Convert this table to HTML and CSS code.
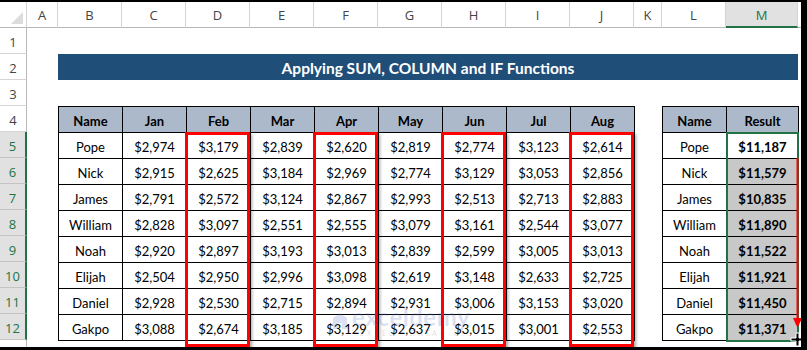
FILE: index.html
```html
<!DOCTYPE html>
<html lang="en">
<head>
  <meta charset="UTF-8">
  <title>Applying SUM, COLUMN and IF Functions</title>
  <link rel="stylesheet" href="styles.css">
</head>
<body>
  <div class="frame">
    <!-- column letters -->
    <div class="colheads">
      <div class="ch corner"><span class="tri"></span></div>
      <div class="ch col-a">A</div>
      <div class="ch">B</div>
      <div class="ch">C</div>
      <div class="ch">D</div>
      <div class="ch">E</div>
      <div class="ch">F</div>
      <div class="ch">G</div>
      <div class="ch">H</div>
      <div class="ch">I</div>
      <div class="ch">J</div>
      <div class="ch col-k">K</div>
      <div class="ch">L</div>
      <div class="ch col-m sel">M</div>
      <div class="ch col-rest"></div>
    </div>

    <div class="sheet">
      <!-- row numbers -->
      <div class="rowheads">
        <div class="rh">1</div>
        <div class="rh">2</div>
        <div class="rh">3</div>
        <div class="rh">4</div>
        <div class="rh sel">5</div>
        <div class="rh sel">6</div>
        <div class="rh sel">7</div>
        <div class="rh sel">8</div>
        <div class="rh sel">9</div>
        <div class="rh sel">10</div>
        <div class="rh sel">11</div>
        <div class="rh sel">12</div>
        <div class="rh"></div>
      </div>

      <div class="canvas">
        <div class="blank-row"></div>
        <div class="title">Applying SUM, COLUMN and IF Functions</div>
        <div class="blank-row"></div>

        <div class="tables">
          <div class="tbl-wrap">
            <table class="data sales">
              <tr class="head">
                <td>Name</td><td>Jan</td><td>Feb</td><td>Mar</td><td>Apr</td><td>May</td><td>Jun</td><td>Jul</td><td>Aug</td>
              </tr>
              <tr><td>Pope</td><td>$2,974</td><td>$3,179</td><td>$2,839</td><td>$2,620</td><td>$2,819</td><td>$2,774</td><td>$3,123</td><td>$2,614</td></tr>
              <tr><td>Nick</td><td>$2,915</td><td>$2,625</td><td>$3,184</td><td>$2,969</td><td>$2,774</td><td>$3,129</td><td>$3,053</td><td>$2,856</td></tr>
              <tr><td>James</td><td>$2,791</td><td>$2,572</td><td>$3,124</td><td>$2,867</td><td>$2,993</td><td>$2,513</td><td>$2,713</td><td>$2,883</td></tr>
              <tr><td>William</td><td>$2,828</td><td>$3,097</td><td>$2,551</td><td>$2,555</td><td>$3,079</td><td>$3,161</td><td>$2,544</td><td>$3,077</td></tr>
              <tr><td>Noah</td><td>$2,920</td><td>$2,897</td><td>$3,193</td><td>$3,013</td><td>$2,839</td><td>$2,599</td><td>$3,005</td><td>$3,013</td></tr>
              <tr><td>Elijah</td><td>$2,504</td><td>$2,950</td><td>$2,996</td><td>$3,098</td><td>$2,619</td><td>$3,148</td><td>$2,633</td><td>$2,725</td></tr>
              <tr><td>Daniel</td><td>$2,928</td><td>$2,530</td><td>$2,715</td><td>$2,894</td><td>$2,931</td><td>$3,006</td><td>$3,153</td><td>$3,020</td></tr>
              <tr><td>Gakpo</td><td>$3,088</td><td>$2,674</td><td>$3,185</td><td>$3,129</td><td>$2,637</td><td>$3,015</td><td>$3,001</td><td>$2,553</td></tr>
            </table>

            <!-- red boxes around every other month -->
            <div class="hl hl-d"></div>
            <div class="hl hl-f"></div>
            <div class="hl hl-h"></div>
            <div class="hl hl-j"></div>

            <div class="watermark">
              <svg class="wm-icon" width="16" height="18" viewBox="0 0 16 18">
                <path d="M8 1 L15 6 L15 17 L10 17 L10 11 L6 11 L6 17 L1 17 L1 6 Z" fill="currentColor"/>
              </svg>
              <div class="wm-text">
                <span class="wm-name">exceldemy</span>
                <span class="wm-sub">EXCEL · DATA · BI</span>
              </div>
            </div>
          </div>

          <div class="tbl-wrap">
            <table class="data result">
              <tr class="head"><td>Name</td><td>Result</td></tr>
              <tr><td>Pope</td><td class="val active">$11,187</td></tr>
              <tr><td>Nick</td><td class="val">$11,579</td></tr>
              <tr><td>James</td><td class="val">$10,835</td></tr>
              <tr><td>William</td><td class="val">$11,890</td></tr>
              <tr><td>Noah</td><td class="val">$11,522</td></tr>
              <tr><td>Elijah</td><td class="val">$11,921</td></tr>
              <tr><td>Daniel</td><td class="val">$11,450</td></tr>
              <tr><td>Gakpo</td><td class="val">$11,371</td></tr>
            </table>

            <div class="selection"></div>

            <svg class="fill-arrow" width="12" height="175" viewBox="0 0 12 175">
              <line x1="6.5" y1="0" x2="6.5" y2="162" stroke="#ff0000" stroke-width="2"/>
              <polygon points="2,160 11,160 6.5,170" fill="#ff0000"/>
            </svg>

            <svg class="fill-cursor" width="16" height="16" viewBox="0 0 16 16">
              <path d="M6 1 H9 V6 H14 V9 H9 V14 H6 V9 H1 V6 H6 Z" fill="#000" stroke="#fff" stroke-width="1"/>
            </svg>
          </div>
        </div>
      </div>
    </div>
  </div>
</body>
</html>
```

FILE: styles.css
```css
:root {
  --title-color: #1f4e78;
  --head-color: #acb9ca;
  --excel-green: #217346;
  --hdr-line: #d4d4d4;
}
* { margin: 0; padding: 0; box-sizing: border-box; }
body {
  font-family: Lato, 'Liberation Sans', sans-serif;
  background: #fff;
}
.frame {
  width: 807px;
  height: 350px;
  border-top: 2px solid #000;
  border-right: 6px solid #000;
  border-bottom: 3px solid #000;
  overflow: hidden;
  background: #fff;
}

/* column letters */
.colheads {
  display: flex;
  height: 26px;
}
.ch {
  flex: none;
  width: 64px;
  height: 26px;
  border-right: 1px solid var(--hdr-line);
  border-bottom: 1px solid #b8b8b8;
  display: flex;
  align-items: center;
  justify-content: center;
  font-family: 'Open Sans', 'Liberation Sans', sans-serif;
  font-size: 13px;
  color: #444;
  padding-top: 1px;
}
.ch.corner { width: 27px; position: relative; }
.ch.col-a { width: 31px; }
.ch.col-k { width: 28px; }
.ch.col-m { width: 72px; }
.ch.col-rest { flex: 1; border-right: none; }
.ch.sel {
  background: #e1e1e1;
  color: var(--excel-green);
  border-bottom: 2px solid var(--excel-green);
}
.tri {
  position: absolute;
  right: 3px;
  bottom: 3px;
  width: 0;
  height: 0;
  border-left: 12px solid transparent;
  border-bottom: 12px solid #dcdcdc;
}

/* rows */
.sheet {
  display: flex;
}
.rowheads {
  flex: none;
  width: 27px;
}
.rh {
  height: 26px;
  border-right: 1px solid #b8b8b8;
  border-bottom: 1px solid var(--hdr-line);
  display: flex;
  align-items: flex-end;
  justify-content: center;
  padding-bottom: 3px;
  font-family: 'Open Sans', 'Liberation Sans', sans-serif;
  font-size: 13px;
  line-height: 16px;
  color: #444;
}
.rh.sel {
  background: #e1e1e1;
  color: var(--excel-green);
  border-right: 2px solid var(--excel-green);
  border-bottom-color: #c4c4c4;
}

.canvas {
  flex: 1;
}
.blank-row { height: 26px; }
.title {
  margin-left: 31px;
  width: 740px;
  height: 26px;
  background: var(--title-color);
  color: #fff;
  font-weight: 700;
  font-size: 15.5px;
  display: flex;
  align-items: center;
  justify-content: center;
  padding-top: 1px;
}

.tables {
  display: flex;
  gap: 27px;
  margin-left: 31px;
}
.tbl-wrap {
  position: relative;
}
.data {
  border-collapse: separate;
  border-spacing: 0;
  table-layout: fixed;
  border-left: 1px solid #000;
  border-top: 1px solid #000;
}
.data td {
  width: 64px;
  height: 26px;
  border-right: 1px solid #000;
  border-bottom: 1px solid #000;
  text-align: center;
  vertical-align: middle;
  font-size: 13px;
  color: #000;
  padding-top: 2px;
}
.data .head td {
  background: var(--head-color);
  font-weight: 700;
}
.sales { width: 577px; }
.result { width: 137px; }
.result td:last-child { width: 72px; }
.result .val {
  font-weight: 700;
  background: #c8c8c8;
}
.result .val.active { background: #fff; }

/* red boxes */
.hl {
  position: absolute;
  top: 26px;
  width: 65px;
  height: 215px;
  border: 3px solid #ff0000;
  box-shadow: 2px 2px 3px rgba(0,0,0,0.35);
}
.hl-d { left: 127px; }
.hl-f { left: 255px; }
.hl-h { left: 383px; }
.hl-j { left: 511px; }

/* selection on the Result column */
.selection {
  position: absolute;
  left: 64px;
  top: 26px;
  width: 73px;
  height: 210px;
  border: 2px solid var(--excel-green);
}
.fill-arrow {
  position: absolute;
  left: 129px;
  top: 52px;
}
.fill-cursor {
  position: absolute;
  left: 128px;
  top: 226px;
}

.watermark {
  position: absolute;
  left: 274px;
  top: 199px;
  display: flex;
  align-items: center;
  gap: 4px;
  color: rgba(90, 120, 200, 0.22);
  pointer-events: none;
}
.wm-text {
  display: flex;
  flex-direction: column;
  line-height: 1;
}
.wm-name {
  font-size: 24px;
  font-weight: 700;
  letter-spacing: 0.5px;
}
.wm-sub {
  font-size: 7px;
  letter-spacing: 3px;
  margin-top: 1px;
  padding-left: 8px;
  color: rgba(60, 60, 60, 0.18);
}
```
